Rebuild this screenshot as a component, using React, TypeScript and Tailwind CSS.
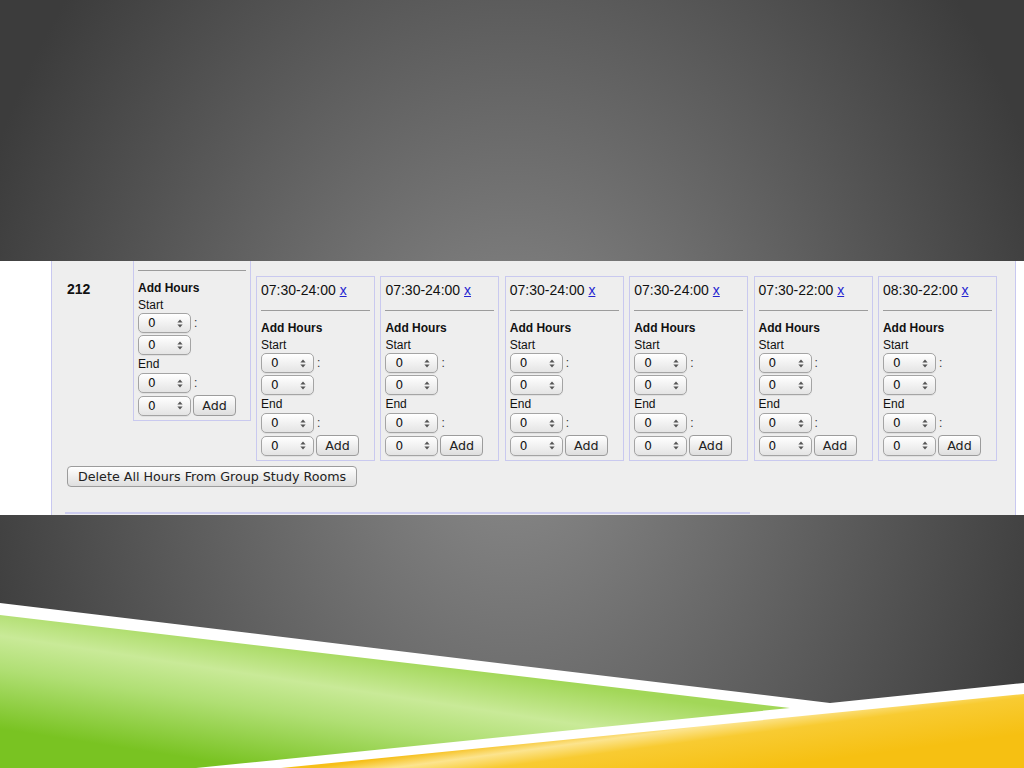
import React from 'react';

const sans = "font-['Liberation_Sans',Arial,sans-serif]";
const ui = "font-['DejaVu_Sans',Verdana,sans-serif]";

const times = ['07:30-24:00', '07:30-24:00', '07:30-24:00', '07:30-24:00', '07:30-22:00', '08:30-22:00'];

function Arrows() {
  return (
    <svg width="6" height="9" viewBox="0 0 6 9" className="shrink-0">
      <path d="M3 0.5 L5.6 3.6 H0.4 Z" fill="#555" />
      <path d="M3 8.5 L5.6 5.4 H0.4 Z" fill="#555" />
    </svg>
  );
}

function Select() {
  return (
    <div className="flex h-[20px] w-[53px] shrink-0 items-center justify-between rounded-[5px] border border-[#a4a4a4] bg-gradient-to-b from-white to-[#e4e4e4] pl-[9px] pr-[7px] shadow-[0_1px_0_rgba(0,0,0,0.06)]">
      <span className={`${ui} text-[12px] leading-none text-[#111]`}>0</span>
      <Arrows />
    </div>
  );
}

function Colon() {
  return <span className={`${sans} ml-[3px] text-[12px] leading-none text-[#333]`}>:</span>;
}

function AddButton() {
  return (
    <button className={`${ui} ml-[2px] flex h-[21px] w-[43px] items-center justify-center rounded-[4px] border border-[#9c9c9c] bg-gradient-to-b from-white to-[#dedede] text-[12.7px] text-[#222]`}>
      Add
    </button>
  );
}

function HoursCell({ time, className = '' }: { time?: string; className?: string }) {
  return (
    <div className={`${sans} shrink-0 border border-[#c9c9ef] bg-[#eeeeee] px-[4px] pt-[4px] pb-[4px] text-[#111] ${className}`}>
      <div className="h-[18px] whitespace-nowrap text-[14px] leading-[18px]">
        {time && (
          <>
            {time} <span className="text-[#2424d0] underline">x</span>
          </>
        )}
      </div>
      <div className="mt-[11px] h-0 border-t border-[#9c9c9c]" />
      <div className="mt-[9px] text-[12px] font-bold leading-[16px]">Add Hours</div>
      <div className="pt-[1px] text-[12px] leading-[16px]">Start</div>
      <div className="flex items-center">
        <Select />
        <Colon />
      </div>
      <div className="mt-[2px] flex items-center">
        <Select />
      </div>
      <div className="mt-[1px] text-[12px] leading-[16px]">End</div>
      <div className="mt-[1px] flex items-center">
        <Select />
        <Colon />
      </div>
      <div className="mt-[2px] flex items-center">
        <Select />
        <AddButton />
      </div>
    </div>
  );
}

function Screenshot() {
  return (
    <div className="flex h-[254px] w-full overflow-hidden bg-white pl-[51px] pr-[8px]">
      <div className="flex-1 overflow-hidden border-x border-[#c8c8f0] bg-[#eeeeee] pl-[15px]">
        <div className="flex items-start">
          <div className={`${sans} mt-[19px] w-[66px] shrink-0 text-[14px] font-bold leading-[18px] text-[#111]`}>212</div>
          <HoursCell className="-mt-[25px] w-[118px]" />
          <div className="ml-[5px] mt-[15px] flex gap-[5.4px]">
            {times.map((t, i) => (
              <HoursCell key={i} time={t} className="w-[119px]" />
            ))}
          </div>
        </div>
        <button className={`${ui} mt-[5px] flex h-[21px] items-center rounded-[4px] border border-[#9c9c9c] bg-gradient-to-b from-white to-[#dedede] px-[10px] text-[12.7px] whitespace-nowrap text-[#222]`}>
          Delete All Hours From Group Study Rooms
        </button>
        <div className="-ml-[2px] mt-[25px] h-[2px] w-[685px] bg-[#cdcdef]" />
      </div>
    </div>
  );
}

function Decor() {
  return (
    <svg className="pointer-events-none absolute inset-0" width="1024" height="768" viewBox="0 0 1024 768">
      <defs>
        <linearGradient id="green" gradientUnits="userSpaceOnUse" x1="320" y1="645" x2="300" y2="775">
          <stop offset="0" stopColor="#a2d758" />
          <stop offset="0.3" stopColor="#c9ea98" />
          <stop offset="0.55" stopColor="#b0df74" />
          <stop offset="1" stopColor="#79c322" />
        </linearGradient>
        <linearGradient id="yellow" gradientUnits="userSpaceOnUse" x1="760" y1="708" x2="768" y2="768">
          <stop offset="0" stopColor="#f6bf1a" />
          <stop offset="0.18" stopColor="#fce48e" />
          <stop offset="0.4" stopColor="#f8cb32" />
          <stop offset="1" stopColor="#f6c012" />
        </linearGradient>
      </defs>
      <polygon points="0,603 830,703 1024,683 1024,768 0,768" fill="#ffffff" />
      <polygon points="0,615 790,708 196,768 0,768" fill="url(#green)" />
      <polygon points="281,768 1024,694 1024,768" fill="url(#yellow)" />
    </svg>
  );
}

export default function App() {
  return (
    <div className="relative h-[768px] w-[1024px] overflow-hidden bg-[radial-gradient(ellipse_560px_700px_at_50%_55%,#8c8c8c,#3c3c3c)] pt-[261px]">
      <Screenshot />
      <Decor />
    </div>
  );
}
